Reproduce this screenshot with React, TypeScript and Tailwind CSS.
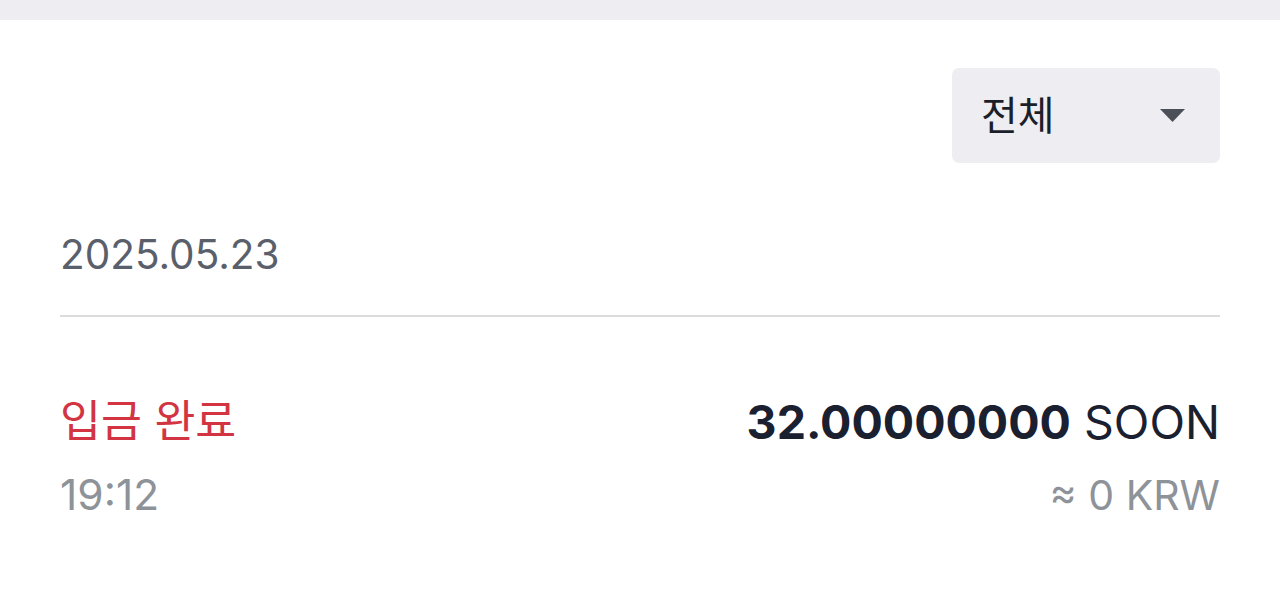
import React from "react";

export default function App() {
  return (
    <div
      className="w-[1280px] h-[590px] bg-white overflow-hidden"
      style={{ fontFamily: 'Inter, "Noto Sans CJK KR", sans-serif' }}
    >
      <div className="h-[20px] bg-[#eeeef2]" />
      <div className="px-[60px]">
        <div className="flex justify-end pt-[48px]">
          <div className="w-[268px] h-[95px] rounded-[7px] bg-[#eeeef2] flex items-center justify-between pl-[29px] pr-[35px]">
            <span className="text-[40px] text-[#1b1f2a] leading-none">전체</span>
            <svg width="25" height="14" viewBox="0 0 25 14">
              <path d="M0 0 L25 0 L12.5 13 Z" fill="#4b4f58" />
            </svg>
          </div>
        </div>
        <div className="pt-[72px] pb-[39px] text-[40.5px] leading-none text-[#5a606b]">
          2025.05.23
        </div>
        <div className="h-[2px] bg-[#dcdcde]" />
        <div className="flex justify-between pt-[82px]">
          <div className="flex flex-col gap-[31px]">
            <span className="text-[44.5px] leading-none text-[#d23441]">입금 완료</span>
            <span className="text-[42.5px] leading-none text-[#8e9299]">19:12</span>
          </div>
          <div className="flex flex-col items-end gap-[30px]">
            <span className="text-[46.5px] leading-none text-[#1b2030]">
              <span className="font-bold">32.00000000</span> SOON
            </span>
            <span className="text-[41px] leading-none text-[#8e9299]">≈ 0 KRW</span>
          </div>
        </div>
      </div>
    </div>
  );
}
